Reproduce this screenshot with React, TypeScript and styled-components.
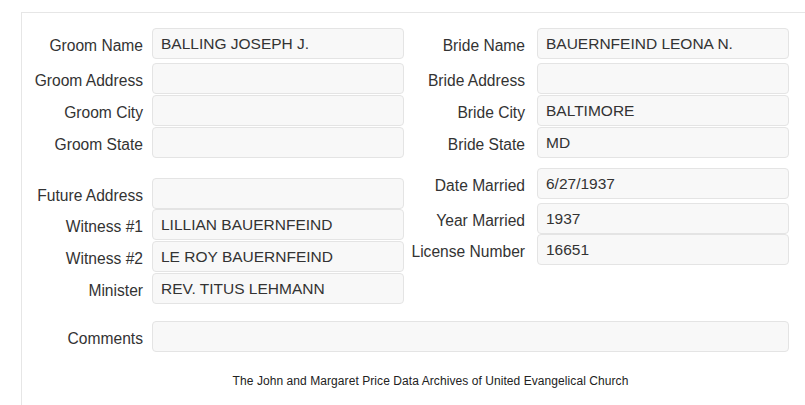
import React from 'react';
import styled, { createGlobalStyle } from 'styled-components';

const GlobalStyle = createGlobalStyle`
  html, body {
    margin: 0;
    padding: 0;
    background: #ffffff;
  }

  body {
    font-family: "Liberation Sans", Arial, sans-serif;
    color: #333333;
  }
`;

const Frame = styled.div`
  margin: 12px 0 0 21px;
  width: 784px;
  height: 393px;
  border-top: 1px solid #e6e6e6;
  border-left: 1px solid #e6e6e6;
  padding: 15px 16px 0 0;
  box-sizing: border-box;
`;

const Section = styled.div`
  display: grid;
  grid-template-columns: 382px 385px;
  align-items: start;
`;

const Column = styled.div`
  display: flex;
  flex-direction: column;
`;

const Field = styled.div<{ $labelWidth: number; $gap: number; $mt: number }>`
  display: grid;
  grid-template-columns: ${(props): string => `${props.$labelWidth}px 1fr`};
  column-gap: ${(props): string => `${props.$gap}px`};
  align-items: center;
  margin-top: ${(props): string => `${props.$mt}px`};
`;

const Label = styled.label`
  text-align: right;
  font-size: 15.6px;
  padding-top: 4px;
  white-space: nowrap;
  color: #333333;
`;

const Value = styled.div`
  height: 31px;
  box-sizing: border-box;
  background: #f8f8f8;
  border: 1px solid #e4e4e4;
  border-radius: 4px;
  padding: 1px 8px 0;
  display: flex;
  align-items: center;
  font-size: 15.5px;
  color: #333333;
  white-space: nowrap;
  overflow: hidden;
`;

const Footer = styled.div`
  margin-top: 22px;
  padding-left: 50px;
  text-align: center;
  font-size: 12px;
  letter-spacing: 0.07px;
  color: #222222;
`;

type Row = { label: string; value: string; mt: number };

const groom: Row[] = [
  { label: 'Groom Name', value: 'BALLING JOSEPH J.', mt: 0 },
  { label: 'Groom Address', value: '', mt: 4 },
  { label: 'Groom City', value: '', mt: 1 },
  { label: 'Groom State', value: '', mt: 1 },
];

const bride: Row[] = [
  { label: 'Bride Name', value: 'BAUERNFEIND LEONA N.', mt: 0 },
  { label: 'Bride Address', value: '', mt: 4 },
  { label: 'Bride City', value: 'BALTIMORE', mt: 1 },
  { label: 'Bride State', value: 'MD', mt: 1 },
];

const people: Row[] = [
  { label: 'Future Address', value: '', mt: 20 },
  { label: 'Witness #1', value: 'LILLIAN BAUERNFEIND', mt: 0 },
  { label: 'Witness #2', value: 'LE ROY BAUERNFEIND', mt: 1 },
  { label: 'Minister', value: 'REV. TITUS LEHMANN', mt: 1 },
];

const marriage: Row[] = [
  { label: 'Date Married', value: '6/27/1937', mt: 10 },
  { label: 'Year Married', value: '1937', mt: 4 },
  { label: 'License Number', value: '16651', mt: 0 },
];

const FieldList = ({ rows, labelWidth, gap }: { rows: Row[]; labelWidth: number; gap: number }) => (
  <Column>
    { rows.map((row) => (
      <Field key={ row.label } $labelWidth={ labelWidth } $gap={ gap } $mt={ row.mt }>
        <Label>{ row.label }</Label>
        <Value>{ row.value }</Value>
      </Field>
    )) }
  </Column>
);

export default function App() {
  return (
    <>
      <GlobalStyle />
      <Frame>
        <Section>
          <FieldList rows={ groom } labelWidth={ 121 } gap={ 9 } />
          <FieldList rows={ bride } labelWidth={ 121 } gap={ 12 } />
        </Section>
        <Section>
          <FieldList rows={ people } labelWidth={ 121 } gap={ 9 } />
          <FieldList rows={ marriage } labelWidth={ 121 } gap={ 12 } />
        </Section>
        <Field $labelWidth={ 121 } $gap={ 9 } $mt={ 17 }>
          <Label>Comments</Label>
          <Value />
        </Field>
        <Footer>The John and Margaret Price Data Archives of United Evangelical Church</Footer>
      </Frame>
    </>
  );
}
